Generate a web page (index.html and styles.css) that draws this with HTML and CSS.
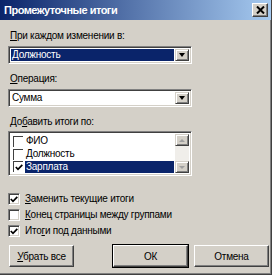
FILE: index.html
```html
<!DOCTYPE html>
<html lang="ru">
<head>
  <meta charset="UTF-8" />
  <title>Промежуточные итоги</title>
  <link rel="stylesheet" href="styles.css">
</head>
<body>

<div class="window">
  <div class="titlebar">
    <span class="title">Промежуточные итоги</span>
    <span class="close">
      <svg width="9" height="8" viewBox="0 0 9 8"><path d="M1 0.5 L8 7.5 M8 0.5 L1 7.5" stroke="#000" stroke-width="2"/></svg>
    </span>
  </div>

  <div class="content">
    <div class="label"><u>П</u>ри каждом изменении в:</div>
    <div class="combo">
      <div class="combo-value selected">Должность</div>
      <div class="drop"><span class="arrow"></span></div>
    </div>

    <div class="label"><u>О</u>перация:</div>
    <div class="combo">
      <div class="combo-value">Сумма</div>
      <div class="drop"><span class="arrow"></span></div>
    </div>

    <div class="label">До<u>б</u>авить итоги по:</div>
    <div class="listbox">
      <div class="items">
        <div class="item"><span class="lbox"></span><span class="itext">ФИО</span></div>
        <div class="item"><span class="lbox"></span><span class="itext">Должность</span></div>
        <div class="item"><span class="lbox"><svg width="8" height="7" viewBox="0 0 8 7"><path d="M0.8 3 L3 5.3 L7.3 0.8" stroke="#000" stroke-width="1.7" fill="none"/></svg></span><span class="itext selected">Зарплата</span></div>
      </div>
      <div class="vscroll">
        <div class="sbtn"><span class="up"></span></div>
        <div class="track"></div>
        <div class="sbtn"><span class="down"></span></div>
      </div>
    </div>

    <div class="checks">
      <div class="check"><span class="box"><svg width="8" height="7" viewBox="0 0 8 7"><path d="M0.8 3 L3 5.3 L7.3 0.8" stroke="#000" stroke-width="1.7" fill="none"/></svg></span><u>З</u>аменить текущие итоги</div>
      <div class="check"><span class="box"></span><u>К</u>онец страницы между группами</div>
      <div class="check"><span class="box"><svg width="8" height="7" viewBox="0 0 8 7"><path d="M0.8 3 L3 5.3 L7.3 0.8" stroke="#000" stroke-width="1.7" fill="none"/></svg></span>Ито<u>г</u>и под данными</div>
    </div>

    <div class="buttons">
      <button class="btn small"><u>У</u>брать все</button>
      <button class="btn default">ОК</button>
      <button class="btn">Отмена</button>
    </div>
  </div>
</div>

</body>
</html>
```

FILE: styles.css
```css
body{
  margin:0;
  background:#d4d0c8;
  font-family:"Liberation Sans", Arial, sans-serif;
  font-size:10px;
  letter-spacing:-0.25px;
  color:#000;
}
.window{
  width:272px;height:275px;box-sizing:border-box;
  background:#d4d0c8;
  border-right:1px solid #404040;border-bottom:1px solid #404040;
  box-shadow:inset -1px -1px 0 #808080;
}
.titlebar{
  height:20px;
  background:linear-gradient(to right,#0a246a,#a6caf0);
  display:flex;align-items:center;justify-content:space-between;
  padding:0 3px 0 4px;
}
.title{color:#fff;font-weight:bold;font-size:11px;letter-spacing:-0.5px;}
.close{
  width:16px;height:14px;box-sizing:border-box;
  background:#d4d0c8;
  border-top:1px solid #fff;border-left:1px solid #fff;
  border-right:1px solid #404040;border-bottom:1px solid #404040;
  box-shadow:inset -1px -1px 0 #808080;
  display:flex;align-items:center;justify-content:center;
}

.content{padding:9px 0 0 8px;}
.label{height:13px;line-height:13px;margin-left:2px;}

.combo{
  width:184px;height:18px;box-sizing:border-box;
  margin:4px 0 8px;
  background:#fff;
  border-top:1px solid #808080;border-left:1px solid #808080;
  border-right:1px solid #fff;border-bottom:1px solid #fff;
  box-shadow:inset 1px 1px 0 #404040, inset -1px -1px 0 #d4d0c8;
  display:flex;padding:2px;
}
.combo-value{flex:1;line-height:12px;padding-left:1px;margin-right:1px;}
.selected{background:#0a246a;color:#fff;}
.drop{
  width:14px;box-sizing:border-box;
  background:#d4d0c8;
  border-top:1px solid #d4d0c8;border-left:1px solid #d4d0c8;
  border-right:1px solid #404040;border-bottom:1px solid #404040;
  box-shadow:inset 1px 1px 0 #fff, inset -1px -1px 0 #808080;
  display:flex;align-items:center;justify-content:center;
}
.arrow{
  width:0;height:0;
  border-left:3.5px solid transparent;border-right:3.5px solid transparent;
  border-top:4px solid #000;
}

.listbox{
  width:184px;height:45px;box-sizing:border-box;
  margin-top:3px;
  background:#fff;
  border-top:1px solid #808080;border-left:1px solid #808080;
  border-right:1px solid #fff;border-bottom:1px solid #fff;
  box-shadow:inset 1px 1px 0 #404040, inset -1px -1px 0 #d4d0c8;
  display:flex;padding:2px;
}
.items{flex:1;display:flex;flex-direction:column;padding-top:1px;}
.item{height:13px;display:flex;align-items:center;}
.lbox{
  width:10px;height:11px;box-sizing:border-box;margin:0 2px 0 2px;
  background:#fff;
  border-left:1px solid #404040;border-top:1px solid #404040;
  display:flex;align-items:center;justify-content:center;
}
.itext{flex:1;height:12px;line-height:12px;padding-left:1px;margin-right:1px;}
.vscroll{width:14px;display:flex;flex-direction:column;background:#f0eeea;}
.track{flex:1;}
.sbtn{
  height:12px;box-sizing:border-box;
  background:#d4d0c8;
  border-top:1px solid #d4d0c8;border-left:1px solid #d4d0c8;
  border-right:1px solid #404040;border-bottom:1px solid #404040;
  box-shadow:inset 1px 1px 0 #fff, inset -1px -1px 0 #808080;
  display:flex;align-items:center;justify-content:center;
}
.up,.down{width:0;height:0;border-left:3px solid transparent;border-right:3px solid transparent;}
.up{border-bottom:3px solid #a0a0a0;}
.down{border-top:3px solid #a0a0a0;}

.checks{margin-top:17px;display:flex;flex-direction:column;gap:4px;}
.check{height:12px;line-height:12px;display:flex;align-items:center;}
.box{
  width:12px;height:12px;box-sizing:border-box;margin-right:5px;
  background:#fff;
  border-top:1px solid #808080;border-left:1px solid #808080;
  border-right:1px solid #fff;border-bottom:1px solid #fff;
  box-shadow:inset 1px 1px 0 #404040, inset -1px -1px 0 #d4d0c8;
  display:flex;align-items:center;justify-content:center;
}

.buttons{display:flex;margin-top:8px;}
.btn{
  height:22px;width:75px;box-sizing:border-box;
  font-family:inherit;font-size:10px;letter-spacing:-0.25px;color:#000;
  background:#d4d0c8;
  border-top:1px solid #fff;border-left:1px solid #fff;
  border-right:1px solid #404040;border-bottom:1px solid #404040;
  box-shadow:inset -1px -1px 0 #808080;
  padding:0;margin-left:6px;
}
.btn.small{width:65px;margin:0 33px 0 1px;}
.btn.default{outline:1px solid #000;}
```
